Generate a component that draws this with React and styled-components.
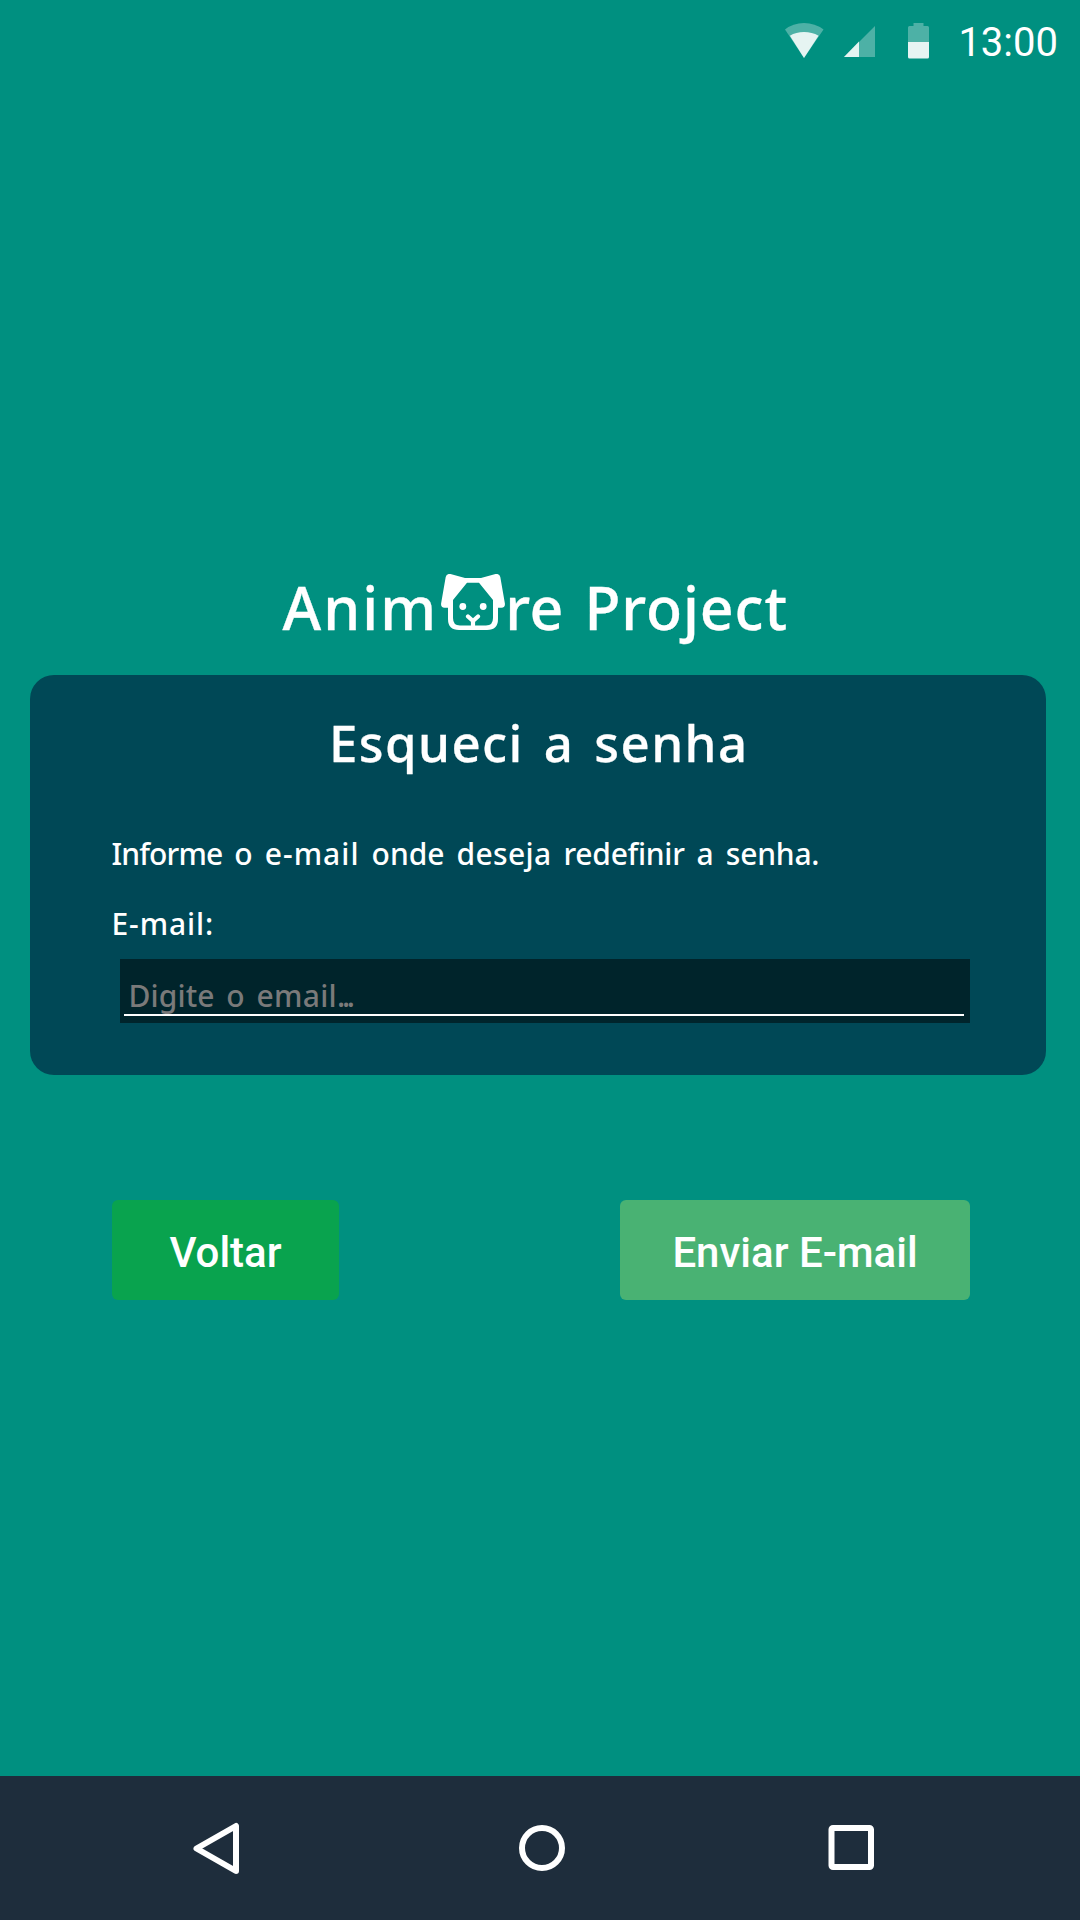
import React from "react";
import styled, { createGlobalStyle } from "styled-components";

const GlobalStyle = createGlobalStyle`
  * { box-sizing: border-box; }
  body { margin: 0; background: #009080; }
`;

const Screen = styled.div`
  display: flex;
  flex-direction: column;
  width: 1080px;
  height: 1920px;
  background: #009080;
  color: #fff;
  font-family: "Noto Sans", "Open Sans", sans-serif;
  font-weight: 500;
  white-space: nowrap;
`;

const StatusBar = styled.header`
  display: flex;
  justify-content: flex-end;
  height: 84px;
  padding: 18px 22px 0 0;
`;

const StatusIcon = styled.svg`
  flex: none;
  display: block;
  height: 48px;
  margin-right: ${(p) => p.$gap}px;
`;

const Clock = styled.time`
  font: 400 40px/50px Roboto, sans-serif;
`;

const Main = styled.main`
  flex: 1;
  display: flex;
  flex-direction: column;
  padding: 484px 34px 0 30px;
`;

const Brand = styled.h1`
  margin: 0 0 27px 252.5px;
  height: 80px;
  font-size: 59px;
  font-weight: 500;
  line-height: 78px;
  word-spacing: 4.6px;
  -webkit-text-stroke: 0.3px #fff;
`;

const Dog = styled.svg`
  width: 64px;
  height: 56px;
  margin: 0 0.5px 0 2.5px;
  vertical-align: baseline;
`;

const Word = styled.span`
  letter-spacing: ${(p) => p.$track || 0}px;
`;

const Card = styled.section`
  display: flex;
  flex-direction: column;
  height: 400px;
  padding: 37px 76px 0 81.5px;
  border-radius: 24px;
  background: #004856;
`;

const Heading = styled.h2`
  margin: 0 0 62px 217.5px;
  font-size: 51px;
  font-weight: 500;
  line-height: 60px;
  letter-spacing: 1.4px;
  word-spacing: 5.4px;
  -webkit-text-stroke: 0.3px #fff;
`;

const Text = styled.p`
  margin: 0 0 30px;
  font-size: 30px;
  line-height: 40px;
  word-spacing: 4.2px;
`;

const Label = styled.label`
  font-size: 30px;
  line-height: 40px;
  letter-spacing: 0.9px;
`;

const Field = styled.div`
  height: 64px;
  margin: 15px 0 0 8.5px;
  padding: 17px 6px 7px 4px;
  background: #00242b;
`;

const Placeholder = styled.div`
  height: 40px;
  padding-left: 4.5px;
  border-bottom: 2px solid #fff;
  color: #7a7a7a;
  font-size: 30px;
  line-height: 40px;
  word-spacing: 4px;
`;

const Actions = styled.div`
  display: flex;
  justify-content: space-between;
  padding: 125px 76px 0 82px;
`;

const Button = styled.button`
  width: ${(p) => p.$width}px;
  height: 100px;
  padding: 5px 0 0;
  border: 0;
  border-radius: 6px;
  background: ${(p) => p.$color};
  color: #fff;
  font: 500 42px/95px Roboto, sans-serif;
`;

const NavBar = styled.nav`
  display: flex;
  align-items: center;
  height: 144px;
  padding-left: 190px;
  background: #1e2d3c;
`;

const NavIcon = styled.svg`
  flex: none;
  width: 52px;
  height: 56px;
  margin-right: ${(p) => p.$gap || 0}px;
  fill: none;
  stroke: #fff;
  stroke-width: 6;
  stroke-linejoin: round;
`;

const MESSAGE = [
  ["Informe", -0.85],
  ["o", 0],
  ["e-mail", 1.05],
  ["onde", 0],
  ["deseja", 0.35],
  ["redefinir", -0.28],
  ["a", 0],
  ["senha.", -0.2],
];

export default function App() {
  return (
    <Screen>
      <GlobalStyle />
      <StatusBar>
        <StatusIcon width="40" viewBox="784 18 40 48" fill="#fff" $gap={20}>
          <path d="M785 29.5Q793 23 804 23T823.5 29.5L804 58Z" opacity=".3" />
          <path d="M789.9 35.7Q796 32 804 32T818.6 35.7L804 58Z" opacity=".86" />
        </StatusIcon>
        <StatusIcon width="32" viewBox="844 18 32 48" fill="#fff" $gap={32}>
          <path d="M844 57L875 26V57Z" opacity=".3" />
          <path d="M844 57L859 41.5V57Z" opacity=".86" />
        </StatusIcon>
        <StatusIcon width="22" viewBox="908 18 22 48" fill="#fff" $gap={28}>
          <path d="M908 42V27.5Q908 26 909.5 26H913.5V23H923.5V26H927.5Q929 26 929 27.5V42Z" opacity=".3" />
          <path d="M908 42H929V57Q929 58.5 927.5 58.5H909.5Q908 58.5 908 57Z" opacity=".9" />
        </StatusIcon>
        <Clock>13:00</Clock>
      </StatusBar>

      <Main>
        <Brand>
          <Word $track={2.1}>Anim</Word>
          <Dog viewBox="441 574 64 56" fill="#fff">
            <path
              fillRule="evenodd"
              d="M450.5 574.1L465 578H481L495.5 574.1Q499.5 573.3 500.3 577L504.9 603.5Q505.3 607.5 501.5 607.7H498V619Q498 630 487 630H459Q448 630 448 619V607.7H444.5Q440.7 607.5 441.1 603.5L445.7 577Q446.5 573.3 450.5 574.1ZM467 582.8L453 600V618Q453 625.6 460 625.6H486Q493 625.6 493 618V600L479 582.8Z"
            />
            <circle cx="462.8" cy="606.5" r="3.4" />
            <circle cx="483.2" cy="606.5" r="3.4" />
            <path
              d="M468 616.5L473 621L478 616.5M473 621V628"
              fill="none"
              stroke="#fff"
              strokeWidth="4.2"
              strokeLinecap="round"
            />
          </Dog>
          <Word $track={0.3}>re</Word>
          <Word $track={0.9}> Project</Word>
        </Brand>

        <Card>
          <Heading>Esqueci a senha</Heading>
          <Text>
            {MESSAGE.map(([word, track], i) => (
              <React.Fragment key={i}>
                {i > 0 && " "}
                <Word $track={track}>{word}</Word>
              </React.Fragment>
            ))}
          </Text>
          <Label>E-mail:</Label>
          <Field>
            <Placeholder>
              <Word $track={0.1}>Digite</Word> <Word $track={0}>o</Word>{" "}
              <Word $track={0.3}>email</Word>
              <Word $track={-3.3}>...</Word>
            </Placeholder>
          </Field>
        </Card>

        <Actions>
          <Button $width={227} $color="#09a34e">Voltar</Button>
          <Button $width={350} $color="#49b273">Enviar E-mail</Button>
        </Actions>
      </Main>

      <NavBar>
        <NavIcon viewBox="190 1820 52 56" $gap={274}>
          <path d="M196.5 1848.5L236 1826V1871Z" />
        </NavIcon>
        <NavIcon viewBox="516 1820 52 56" $gap={258}>
          <circle cx="542" cy="1848" r="20" />
        </NavIcon>
        <NavIcon viewBox="826 1820 52 56">
          <rect x="831.5" y="1828" width="39.5" height="39" rx="1.5" />
        </NavIcon>
      </NavBar>
    </Screen>
  );
}
